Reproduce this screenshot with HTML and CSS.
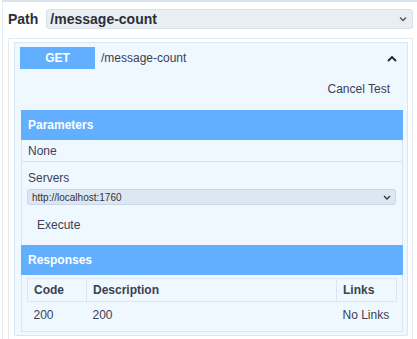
FILE: index.html
```html
<!DOCTYPE html>
<html>
<head lang="en">
    <meta charset="UTF-8">
    <title>message-count</title>
    <link rel="stylesheet" href="styles.css">
</head>
<body>
<div class="page">
    <div class="path-row">
        <span class="path-label">Path</span>
        <div class="path-select">
            <span>/message-count</span>
            <svg class="caret" width="8" height="6" viewBox="0 0 8 6"><path d="M1 1.5 L4 4.5 L7 1.5" fill="none" stroke="#555" stroke-width="1.3"/></svg>
        </div>
    </div>

    <div class="opblock-wrap">
        <div class="opblock">
            <div class="summary">
                <span class="method">GET</span>
                <span class="summary-path">/message-count</span>
                <svg class="arrow" width="10" height="7" viewBox="0 0 10 7"><path d="M1 6 L5 2 L9 6" fill="none" stroke="#222" stroke-width="1.8"/></svg>
            </div>
            <div class="try-row">
                <span class="cancel">Cancel Test</span>
            </div>

            <div class="sections">
                <div class="sec-head">Parameters</div>
                <div class="none-row">None</div>
                <div class="servers">
                    <div class="servers-label">Servers</div>
                    <div class="server-select">
                        <span>http://localhost:1760</span>
                        <svg width="8" height="5" viewBox="0 0 8 5"><path d="M1 1 L4 4 L7 1" fill="none" stroke="#333" stroke-width="1.3"/></svg>
                    </div>
                </div>
                <div class="exec">Execute</div>
                <div class="sec-head">Responses</div>
                <table class="resp">
                    <thead>
                    <tr>
                        <th class="c-code">Code</th>
                        <th class="c-desc">Description</th>
                        <th class="c-links">Links</th>
                    </tr>
                    </thead>
                    <tbody>
                    <tr>
                        <td>200</td>
                        <td>200</td>
                        <td>No Links</td>
                    </tr>
                    </tbody>
                </table>
            </div>
        </div>
    </div>
</div>
</body>
</html>
```

FILE: styles.css
```css
*{padding: 0;margin: 0;box-sizing: border-box;}
body{background: #fff;font: 12px "Liberation Sans", Arial, sans-serif;color: #3b4151;height: 339px;overflow: hidden;}
.page{margin-left: 2px;border-left: 1px solid #e6ecf2;border-top: 2px solid #dae3ec;padding: 7px 4px 0 5px;height: 339px;}

.path-row{display: flex;align-items: center;gap: 8px;height: 20px;}
.path-label{font-weight: bold;font-size: 14px;color: #2b2f38;}
.path-select{flex: 1;height: 20px;background: #e9eef4;border: 1px solid #d9e0e8;border-radius: 3px;display: flex;align-items: center;justify-content: space-between;padding: 0 5px 0 3px;font-weight: bold;font-size: 14px;color: #2b2f38;}

.opblock-wrap{margin-top: 9px;border: 1px solid #e4eaf0;padding: 3px 4px 0 5px;height: 310px;}
.opblock{background: #eff7ff;border: 1px solid #d6e7f8;padding: 4px 4px 3px 6px;}

.summary{display: flex;align-items: center;height: 22px;margin-left: -1px;}
.method{width: 75px;height: 22px;line-height: 22px;background: #61affe;color: #fff;font-weight: bold;text-align: center;font-size: 12px;}
.summary-path{margin-left: 6px;flex: 1;color: #3b4151;}
.arrow{margin-right: 6px;}

.try-row{display: flex;justify-content: flex-end;padding: 13px 13px 14px 0;line-height: 14px;}
.cancel{color: #3b4151;}

.sections{border: 1px solid #d7e5f4;border-top: none;padding-bottom: 3px;}
.sec-head{height: 30px;line-height: 30px;background: #61affe;color: #fff;font-weight: bold;padding-left: 7px;margin: 0 -1px;}
.none-row{height: 22px;line-height: 20px;padding: 1px 0 0 6px;border-bottom: 1px solid #d7e3ef;}
.servers{padding: 9px 6px 0 5px;}
.servers-label{line-height: 14px;padding-left: 1px;}
.server-select{margin-top: 4px;height: 16px;background: #dce7f4;border: 1px solid #c9d8e9;border-radius: 3px;display: flex;align-items: center;justify-content: space-between;padding: 0 4px 0 4px;font-size: 10px;color: #333;}
.exec{padding: 13px 0 13px 15px;line-height: 14px;}

.resp{margin: 3px 5px 0 5px;width: 369px;border-collapse: collapse;table-layout: fixed;}
.resp th{text-align: left;font-weight: bold;color: #3b4151;border: 1px solid #dbe6f1;height: 23px;padding-left: 6px;}
.resp td{height: 26px;padding-left: 6px;padding-top: 1px;}
.c-code{width: 59px;}
.c-desc{width: 250px;}
.c-links{width: 60px;}
```
